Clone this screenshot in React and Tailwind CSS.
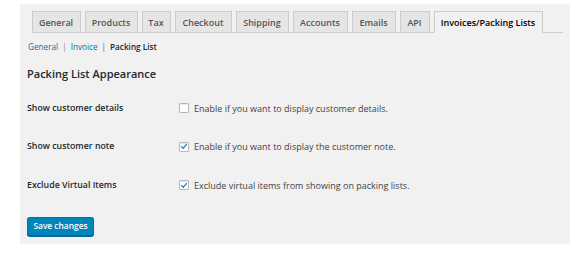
import React from "react";

const tabs = [
  ["General", "w-[49px]"],
  ["Products", "w-[53px]"],
  ["Tax", "w-[29px]"],
  ["Checkout", "w-[57px]"],
  ["Shipping", "w-[53px]"],
  ["Accounts", "w-[55px]"],
  ["Emails", "w-[44px]"],
  ["API", "w-[30px]"],
];

function Check({ checked }) {
  return (
    <span className="relative flex h-[10px] w-[10px] shrink-0 items-center justify-center rounded-[1px] border border-[#b4b9be] bg-white shadow-[inset_0_1px_1px_rgba(0,0,0,0.1)]">
      {checked && (
        <svg viewBox="0 0 10 10" className="h-[9px] w-[9px]">
          <path d="M2 5.2 L4 7.2 L8 2.6" fill="none" stroke="#1e8cbe" strokeWidth="1.7" strokeLinecap="round" strokeLinejoin="round" />
        </svg>
      )}
    </span>
  );
}

const rows = [
  { label: "Show customer details", text: "Enable if you want to display customer details.", checked: false },
  { label: "Show customer note", text: "Enable if you want to display the customer note.", checked: true },
  { label: "Exclude Virtual Items", text: "Exclude virtual items from showing on packing lists.", checked: true },
];

export default function App() {
  return (
    <div className="h-[255px] w-[579px] bg-white pt-[4px] pl-[20px]" style={{ fontFamily: '"Open Sans", "Noto Sans", sans-serif' }}>
      <div className="h-[240px] w-[550px] bg-[#f1f1f1] pt-[7px]">
        <div className="ml-[11.5px] mr-[7px] flex gap-[4px] border-b border-[#cccccc]">
          {tabs.map(([t, w]) => (
            <div
              key={t}
              className={`-mb-px flex h-[22px] items-center justify-center border border-[#cccccc] bg-[#e5e5e5] text-[9px] font-semibold leading-none text-[#555555] ${w}`}
            >
              {t}
            </div>
          ))}
          <div className="-mb-px flex h-[22px] w-[109px] items-center justify-center border border-[#cccccc] border-b-[#f1f1f1] bg-[#f1f1f1] text-[9px] font-semibold leading-none text-black">
            Invoices/Packing Lists
          </div>
        </div>
        <div className="ml-[8px] mt-[8px] flex h-[12px] items-center text-[8.2px] leading-none text-[#555]">
          <span className="text-[#0073aa]">General</span>
          <span className="mx-[4px] text-[#888]">|</span>
          <span className="text-[#0073aa]">Invoice</span>
          <span className="mx-[4px] text-[#555]">|</span>
          <span className="font-semibold text-[#23282d]">Packing List</span>
        </div>
        <div className="ml-[7px] mt-[13px] flex h-[14px] items-center text-[11px] font-semibold leading-none text-[#23282d]">
          Packing List Appearance
        </div>
        <div className="mt-[9px] flex flex-col">
          {rows.map((r) => (
            <div key={r.label} className="flex h-[38.5px] items-center">
              <div className="ml-[7px] w-[151.5px] text-[8.8px] font-semibold leading-none text-[#23282d]">{r.label}</div>
              <Check checked={r.checked} />
              <span className="ml-[5.5px] text-[9px] leading-none text-[#444]">{r.text}</span>
            </div>
          ))}
        </div>
        <div className="ml-[7px] mt-[12.5px]">
          <div className="flex h-[19px] w-[67px] items-center justify-center rounded-[3px] border border-[#0073aa] border-b-[#006799] bg-[#0085ba] text-[8.4px] font-semibold leading-none text-white shadow-[0_1px_0_#006799]">
            Save changes
          </div>
        </div>
      </div>
    </div>
  );
}
